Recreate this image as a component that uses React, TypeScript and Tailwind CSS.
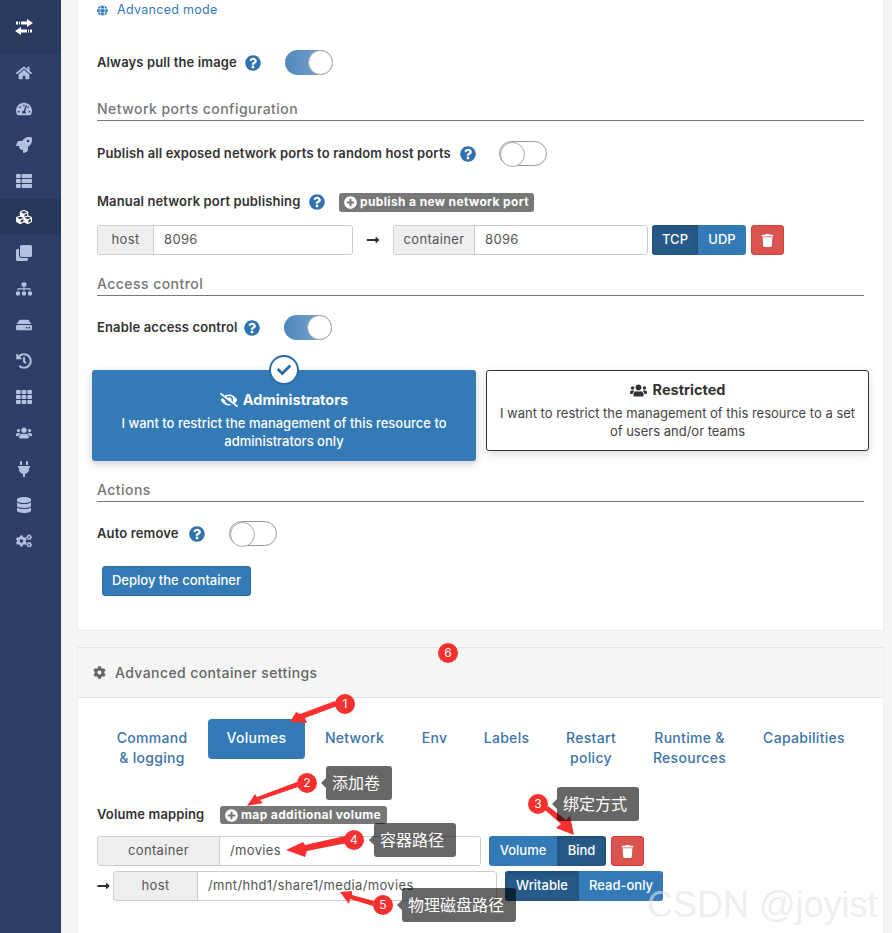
import type { ReactNode } from "react";
import {
  FaCheck,
  FaClone,
  FaCog,
  FaCogs,
  FaCubes,
  FaDatabase,
  FaEyeSlash,
  FaGlobe,
  FaHdd,
  FaHistory,
  FaHome,
  FaLongArrowAltRight,
  FaPlug,
  FaPlusCircle,
  FaQuestionCircle,
  FaRocket,
  FaSitemap,
  FaTachometerAlt,
  FaTh,
  FaThList,
  FaTrash,
  FaUsers,
} from "react-icons/fa";

const navIcons = [
  FaHome,
  FaTachometerAlt,
  FaRocket,
  FaThList,
  FaCubes,
  FaClone,
  FaSitemap,
  FaHdd,
  FaHistory,
  FaTh,
  FaUsers,
  FaPlug,
  FaDatabase,
  FaCogs,
];

const Logo = () => (
  <svg width="18" height="16" viewBox="0 0 18 16" fill="white">
    <rect x="1" y="2.5" width="2" height="3" />
    <rect x="4" y="2.5" width="1" height="3" />
    <rect x="6" y="2.5" width="7" height="3" />
    <polygon points="12,0 18,4 12,8" />
    <polygon points="6,8 0,12 6,16" />
    <rect x="5" y="10.5" width="7" height="3" />
    <rect x="13" y="10.5" width="1" height="3" />
    <rect x="15" y="10.5" width="2" height="3" />
  </svg>
);

const Help = () => <FaQuestionCircle className="text-[16px] text-[#2f72b0] shrink-0" />;

const Toggle = ({ on }: { on?: boolean }) => (
  <div
    className={`relative w-[48px] h-[25px] rounded-full shrink-0 ${
      on ? "bg-gradient-to-r from-[#4f88bd] to-[#7fa9d0]" : "bg-white border border-[#999]"
    }`}
  >
    <div
      className={`absolute top-0 w-[25px] h-[25px] rounded-full bg-white border border-[#aaa] ${
        on ? "right-0" : "left-0 -top-px"
      }`}
    />
  </div>
);

const Section = ({ title }: { title: string }) => (
  <div className="h-[22px] border-b border-[#777] text-[14px] leading-[19px] font-medium text-[#767676] tracking-[0.45px]">
    {title}
  </div>
);

const Badge = ({ children, className }: { children: ReactNode; className: string }) => (
  <div
    className={`flex items-center gap-[3px] bg-[#777] rounded-[3px] text-white text-[12px] font-bold tracking-[0.37px] px-[5px] ${className}`}
  >
    <FaPlusCircle className="text-[13px] shrink-0" />
    {children}
  </div>
);

const Field = ({
  label,
  value,
  className,
  labelClass,
}: {
  label: string;
  value: string;
  className: string;
  labelClass: string;
}) => (
  <div
    className={`flex h-[30px] border border-[#ccc] rounded-[3px] text-[13px] text-[#555] tracking-[0.35px] shrink-0 ${className}`}
  >
    <div className={`flex items-center justify-center bg-[#eee] border-r border-[#ccc] rounded-l-[3px] ${labelClass}`}>
      {label}
    </div>
    <div className="flex-1 flex items-center px-[10px] bg-white rounded-r-[3px]">{value}</div>
  </div>
);

const Seg = ({ children, active, className }: { children: ReactNode; active?: boolean; className: string }) => (
  <div
    className={`flex items-center justify-center text-white text-[13px] font-medium ${
      active ? "bg-[#265a88] shadow-[inset_0_2px_5px_rgba(0,0,0,0.15)]" : "bg-[#337ab7]"
    } ${className}`}
  >
    {children}
  </div>
);

const TrashBtn = () => (
  <div className="w-[33px] h-[30px] flex items-center justify-center bg-[#d9534f] border border-[#d43f3a] rounded-[3px] text-white text-[13px] shrink-0">
    <FaTrash />
  </div>
);

const tabs: [string, string][] = [
  ["Command\n& logging", "w-[110px]"],
  ["Volumes", "w-[97px]"],
  ["Network", "w-[97px]"],
  ["Env", "w-[61px]"],
  ["Labels", "w-[81px]"],
  ["Restart\npolicy", "w-[86px]"],
  ["Runtime &\nResources", "w-[109px]"],
  ["Capabilities", "w-[118px]"],
];

const Pin = ({ n, className }: { n: number; className: string }) => (
  <div
    className={`absolute w-[20px] h-[20px] rounded-full bg-[#f5302f] text-white text-[12px] flex items-center justify-center ${className}`}
  >
    {n}
  </div>
);

const Note = ({ text, className }: { text: string; className: string }) => (
  <div
    className={`absolute h-[34px] flex items-center pl-[6px] bg-black/60 rounded-[3px] text-white text-[16px] ${className}`}
  >
    <span className="absolute -left-[5px] top-[12px] w-0 h-0 border-y-[5px] border-y-transparent border-r-[5px] border-r-black/60" />
    {text}
  </div>
);

export default function App() {
  return (
    <div
      className="relative flex w-[892px] h-[933px] overflow-hidden bg-[#f5f5f5] text-[#333]"
      style={{ fontFamily: 'Inter, "Noto Sans CJK SC", sans-serif' }}
    >
      <aside className="w-[61px] shrink-0 bg-[#2d3e67] text-[#b4c0e0]">
        <div className="h-[54px] bg-[#293a5e] flex items-center justify-center pr-[13px]">
          <Logo />
        </div>
        {navIcons.map((Icon, i) => (
          <div
            key={i}
            className={`h-[36px] flex items-center justify-center pr-[13px] text-[16px] ${
              i === 0 ? "mt-[1px]" : ""
            } ${i === 4 ? "bg-[#27365b] text-white" : ""}`}
          >
            <Icon />
          </div>
        ))}
      </aside>

      <main className="flex-1 pl-[16px] pr-[8px]">
        <div className="h-[631px] bg-white border-x border-b border-[#eee] px-[19px]">
          <div className="h-[20px] pt-px flex items-center gap-[9px] text-[12.5px] text-[#337ab7] tracking-[0.3px]">
            <FaGlobe className="text-[11px]" />
            Advanced mode
          </div>
          <div className="mt-[30px] h-[25px] flex items-center font-semibold text-[13px] tracking-[0.13px]">
            <span className="w-[148px]">Always pull the image</span>
            <Help />
            <span className="w-[24px]" />
            <Toggle on />
          </div>
          <div className="mt-[24px]">
            <Section title="Network ports configuration" />
          </div>
          <div className="mt-[20px] h-[25px] flex items-center font-semibold text-[13px] tracking-[0.13px]">
            <span className="w-[363px] whitespace-nowrap">Publish all exposed network ports to random host ports</span>
            <Help />
            <span className="w-[23px]" />
            <Toggle />
          </div>
          <div className="mt-[26px] h-[20px] flex items-center font-semibold text-[13px] tracking-[0.13px]">
            <span className="w-[212px]">Manual network port publishing</span>
            <Help />
            <Badge className="h-[19px] w-[195px] ml-[14px]">
              <span className="whitespace-nowrap">publish a new network port</span>
            </Badge>
          </div>
          <div className="mt-[13px] flex items-center">
            <Field label="host" value="8096" className="w-[256px]" labelClass="w-[56px]" />
            <FaLongArrowAltRight className="mx-[13px] w-[14px] text-[14px] text-[#333]" />
            <Field label="container" value="8096" className="w-[255px]" labelClass="w-[81px]" />
            <div className="flex h-[30px] ml-[4px] rounded-[3px] overflow-hidden">
              <Seg active className="w-[46px]">TCP</Seg>
              <Seg className="w-[48px]">UDP</Seg>
            </div>
            <div className="ml-[5px]">
              <TrashBtn />
            </div>
          </div>
          <div className="mt-[19px]">
            <Section title="Access control" />
          </div>
          <div className="mt-[19px] h-[25px] flex items-center font-semibold text-[13px] tracking-[0.13px]">
            <span className="w-[147px]">Enable access control</span>
            <Help />
            <span className="w-[24px]" />
            <Toggle on />
          </div>
          <div className="mt-[30px] -mx-[5px] flex items-start gap-[10px]">
            <div className="relative w-[384px] h-[91px] bg-[#337ab7] rounded-[3px] shadow-[0_3px_8px_rgba(0,0,0,0.2)] text-white text-center px-[20px] pt-[20px]">
              <div className="absolute -top-[15px] left-[177px] w-[30px] h-[30px] rounded-full bg-white border-2 border-[#2d6ca2] flex items-center justify-center text-[#2d6ca2] text-[14px]">
                <FaCheck />
              </div>
              <div className="flex items-center justify-center gap-[5px] text-[14.5px] font-bold leading-[20px]">
                <FaEyeSlash className="text-[18px]" />
                Administrators
              </div>
              <div className="mt-[4px] text-[13px] leading-[18px] font-medium">
                I want to restrict the management of this resource to administrators only
              </div>
            </div>
            <div className="w-[383px] h-[81px] bg-white border border-[#333] rounded-[3px] shadow-[0_3px_8px_rgba(0,0,0,0.15)] text-center px-[12px] pt-[9px]">
              <div className="flex items-center justify-center gap-[6px] text-[14.5px] font-bold leading-[20px]">
                <FaUsers className="text-[17px]" />
                Restricted
              </div>
              <div className="mt-[4px] text-[13px] leading-[18px] text-[#444]">
                I want to restrict the management of this resource to a set of users and/or teams
              </div>
            </div>
          </div>
          <div className="mt-[19px]">
            <Section title="Actions" />
          </div>
          <div className="mt-[19px] h-[25px] flex items-center font-semibold text-[13px] tracking-[0.13px]">
            <span className="w-[92px]">Auto remove</span>
            <Help />
            <span className="w-[24px]" />
            <Toggle />
          </div>
          <div className="mt-[20px] ml-[5px] w-[149px] h-[30px] flex items-center justify-center bg-[#337ab7] border border-[#2e6da4] rounded-[3px] text-white text-[13px] font-medium">
            Deploy the container
          </div>
        </div>

        <div className="mt-[16px] h-[300px] bg-white border-x border-[#eee]">
          <div className="h-[51px] pb-px flex items-center gap-[9px] px-[15px] bg-[#f5f5f5] border-y border-[#e4e4e4] text-[14px] font-medium text-[#666] tracking-[0.4px]">
            <FaCog className="text-[13px]" />
            Advanced container settings
          </div>
          <div className="px-[19px]">
            <div className="mt-[21px] h-[50px] flex gap-[1px] text-[14px] leading-[20px] font-medium text-[#3b74a8] text-center tracking-[0.3px]">
              {tabs.map(([label, width]) => (
                <div
                  key={label}
                  className={`${width} shrink-0 pt-[9px] whitespace-pre-line ${
                    label === "Volumes" ? "h-[40px] bg-[#337ab7] text-white rounded-[4px]" : ""
                  }`}
                >
                  {label}
                </div>
              ))}
            </div>
            <div className="mt-[37px] h-[18px] flex items-center font-semibold text-[13px] tracking-[0.13px]">
              <span className="w-[123px] whitespace-nowrap">Volume mapping</span>
              <Badge className="h-[18px] w-[167px]">
                <span className="whitespace-nowrap">map additional volume</span>
              </Badge>
            </div>
            <div className="mt-[12px] flex items-center">
              <Field label="container" value="/movies" className="w-[384px]" labelClass="w-[122px]" />
              <div className="flex h-[30px] ml-[8px] rounded-[3px] overflow-hidden">
                <Seg className="w-[68px]">Volume</Seg>
                <Seg active className="w-[49px]">Bind</Seg>
              </div>
              <div className="ml-[5px]">
                <TrashBtn />
              </div>
            </div>
            <div className="mt-[5px] flex items-center">
              <FaLongArrowAltRight className="w-[13px] mr-[3px] text-[14px] text-[#333]" />
              <Field label="host" value="/mnt/hhd1/share1/media/movies" className="w-[384px]" labelClass="w-[84px]" />
              <div className="flex h-[30px] ml-[8px] rounded-[3px] overflow-hidden">
                <Seg active className="w-[74px]">Writable</Seg>
                <Seg className="w-[84px]">Read-only</Seg>
              </div>
            </div>
          </div>
        </div>
      </main>

      {/* screenshot annotations on top of the page */}
      <svg className="absolute inset-0 pointer-events-none" width="892" height="933">
        <g fill="#f5302f">
          <polygon points="290,722 296,712 300,714 335,701 337,706 305,718 307,723" />
          <polygon points="247,806 255,794 257,797 297,782 298,787 260,800 263,803" />
          <polygon points="574,835 556,828 561,824 545,810 548,806 566,820 570,816" />
          <polygon points="286,850 303,842 305,845 345,836 347,843 307,851 305,857" />
          <polygon points="340,892 352,891 352,895 374,901 373,906 350,899 349,904" />
        </g>
      </svg>
      <Pin n={1} className="left-[335px] top-[694px]" />
      <Pin n={2} className="left-[297px] top-[773px]" />
      <Pin n={3} className="left-[528px] top-[794px]" />
      <Pin n={4} className="left-[344px] top-[830px]" />
      <Pin n={5} className="left-[373px] top-[895px]" />
      <Pin n={6} className="left-[438px] top-[643px]" />
      <Note text="添加卷" className="left-[326px] top-[766px] w-[66px]" />
      <Note text="绑定方式" className="left-[557px] top-[787px] w-[82px]" />
      <Note text="容器路径" className="left-[374px] top-[823px] w-[82px]" />
      <Note text="物理磁盘路径" className="left-[402px] top-[888px] w-[114px]" />
      <div
        className="absolute left-[647px] top-[881px] text-[36px] leading-[48px] text-[#dfe3e8]/60 whitespace-nowrap"
        style={{ fontFamily: '"Liberation Sans", sans-serif' }}
      >
        CSDN @joyist
      </div>
    </div>
  );
}
